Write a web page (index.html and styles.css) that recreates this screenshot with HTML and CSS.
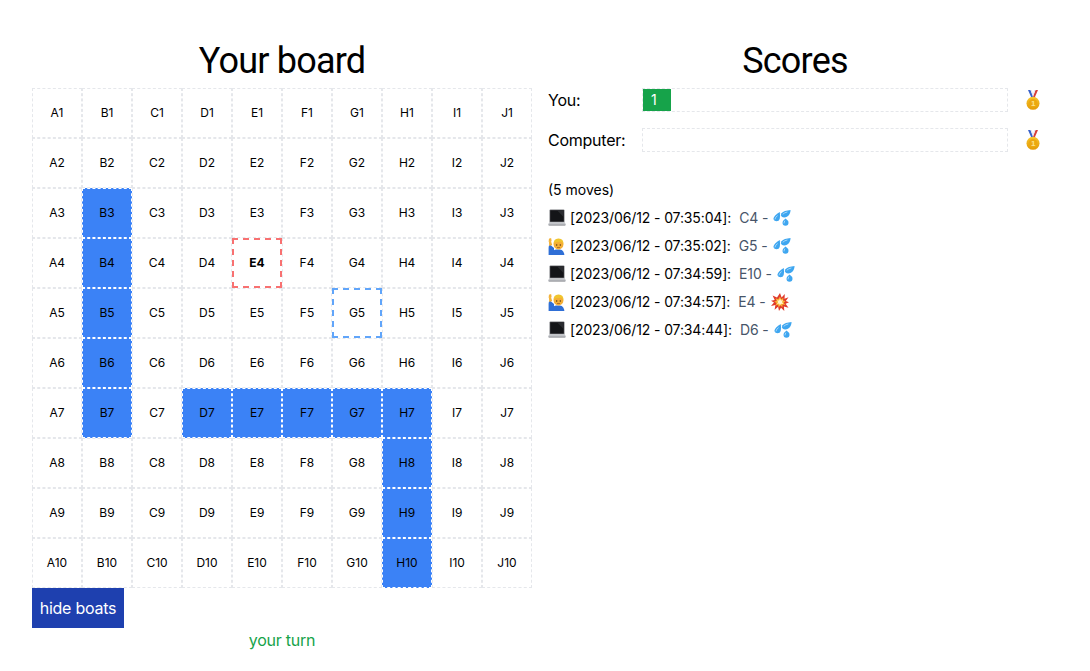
FILE: index.html
```html
<!DOCTYPE html>
<html lang="en">
<head>
    <meta charset="UTF-8">
    <meta name="viewport" content="width=device-width, initial-scale=1.0">
    <title>Battleship</title>
    <link rel="stylesheet" href="styles.css">
</head>
<body>
    <svg class="sprites" width="0" height="0" aria-hidden="true">
        <defs>
            <linearGradient id="gold" x1="0" y1="0" x2="0" y2="1">
                <stop offset="0" stop-color="#f7c52a"/>
                <stop offset="1" stop-color="#e39a06"/>
            </linearGradient>
        </defs>
        <symbol id="laptop" viewBox="0 0 18 18">
            <path d="M2.500 .5h13q1 0 1 1v11.500h-15V1.500q0-1 1-1z" fill="#77787c"/>
            <rect x="2.200" y="1.200" width="13.600" height="11.400" fill="#141518"/>
            <path d="M9 1.200h6.800v7z" fill="#2b2c30"/>
            <path d="M1.500 13h15l1.500 2.600q.1.900-.8.9H.8q-.9 0-.8-.9z" fill="#c2c4c8"/>
            <rect x="1" y="15.600" width="16" height=".9" fill="#8d8f94"/>
        </symbol>
        <symbol id="person" viewBox="0 0 18 18">
            <path d="M.6 18V10.500q0-2 1.300-3.100L6 11v7z" fill="#2f6fd6"/>
            <path d="M1.300 9L.9 4.500 2.900 4l1.300 4z" fill="#f3b23a"/>
            <path d="M.7 5Q.3 2 1.900 1l1.400.4.3 2.800z" fill="#f3b23a"/>
            <path d="M4 18q0-5 4-5.600h4q4 .6 4.400 5.600z" fill="#2f6fd6"/>
            <circle cx="10.500" cy="7.500" r="4.900" fill="#f4ae35"/>
            <path d="M5.500 7.500Q5.300 1.400 10.500 1.500 15.800 1.400 15.500 7.500 14.800 5 13 4.800 9 5.500 7 5.200 5.800 6 5.500 7.500z" fill="#f0c52e"/>
            <circle cx="8.700" cy="8" r=".7" fill="#4a2f10"/>
            <circle cx="12.300" cy="8" r=".7" fill="#4a2f10"/>
            <path d="M9 10.500h3" stroke="#a0581a" stroke-width=".7"/>
        </symbol>
        <symbol id="drops" viewBox="0 0 18 18">
            <path d="M6.800 3Q7.400 7 6.700 10A3.300 3.300 0 0 1 .4 10Q.8 6.500 6.800 3z" fill="#3ea6f0"/>
            <path d="M17.600 1Q17.400 5.500 14 7.800 11 9.200 8.800 7.800 7 6.300 8.500 4.200 11 1.500 17.600 1z" fill="#3ea6f0"/>
            <path d="M12.500 9.500Q15.500 11.500 15.500 13.800A3 3 0 0 1 9.500 13.800Q9.800 11.500 12.500 9.500z" fill="#3ea6f0"/>
            <path d="M2 10Q2.300 8 4.300 6.800M10 5Q11.500 3.600 14 3M11 14Q11 13 11.700 12" stroke="#bfe3fb" stroke-width=".8" stroke-linecap="round" fill="none"/>
        </symbol>
        <symbol id="boom" viewBox="0 0 18 18">
            <path d="M9 0l1.600 4.400L13.800 1l-.3 4.700 4-1.500-2.700 3.800 3.200 1.300-3.400 1.400 2.900 4-4.600-1.300.4 4.600-3.300-3.300L8 18l-.9-4.300-3.500 3 .8-4.600L0 13l3-3.600L0 7.800l3.700-.8L1.600 2.400l4.400 2z" fill="#e0392a"/>
            <path d="M9 3.500l1.200 2.800 2.300-1.500-.5 2.800 2.600.3-2 1.900 1.800 2.300-2.900-.5-.1 2.600-2.100-1.900-1.700 2.200-.5-2.800-2.700.8 1.200-2.600-2.500-1.100 2.600-1-1.200-2.500 2.700.9z" fill="#f9b233"/>
            <path d="M9 5.500l1 2 2.100-.3-1.100 1.900 1.200 1.800-2.200-.2-1.100 1.800-.8-1.900-2.100.4 1.200-1.900-1.200-1.700 2.100.1z" fill="#fff6cf"/>
        </symbol>
    </svg>

    <div class="game">
        <div class="board-col">
            <h1>Your board</h1>
            <div class="board">
                <div class="cell">A1</div><div class="cell">B1</div><div class="cell">C1</div><div class="cell">D1</div><div class="cell">E1</div><div class="cell">F1</div><div class="cell">G1</div><div class="cell">H1</div><div class="cell">I1</div><div class="cell">J1</div>
                <div class="cell">A2</div><div class="cell">B2</div><div class="cell">C2</div><div class="cell">D2</div><div class="cell">E2</div><div class="cell">F2</div><div class="cell">G2</div><div class="cell">H2</div><div class="cell">I2</div><div class="cell">J2</div>
                <div class="cell">A3</div><div class="cell boat">B3</div><div class="cell">C3</div><div class="cell">D3</div><div class="cell">E3</div><div class="cell">F3</div><div class="cell">G3</div><div class="cell">H3</div><div class="cell">I3</div><div class="cell">J3</div>
                <div class="cell">A4</div><div class="cell boat">B4</div><div class="cell">C4</div><div class="cell">D4</div><div class="cell hit">E4</div><div class="cell">F4</div><div class="cell">G4</div><div class="cell">H4</div><div class="cell">I4</div><div class="cell">J4</div>
                <div class="cell">A5</div><div class="cell boat">B5</div><div class="cell">C5</div><div class="cell">D5</div><div class="cell">E5</div><div class="cell">F5</div><div class="cell miss">G5</div><div class="cell">H5</div><div class="cell">I5</div><div class="cell">J5</div>
                <div class="cell">A6</div><div class="cell boat">B6</div><div class="cell">C6</div><div class="cell">D6</div><div class="cell">E6</div><div class="cell">F6</div><div class="cell">G6</div><div class="cell">H6</div><div class="cell">I6</div><div class="cell">J6</div>
                <div class="cell">A7</div><div class="cell boat">B7</div><div class="cell">C7</div><div class="cell boat">D7</div><div class="cell boat">E7</div><div class="cell boat">F7</div><div class="cell boat">G7</div><div class="cell boat">H7</div><div class="cell">I7</div><div class="cell">J7</div>
                <div class="cell">A8</div><div class="cell">B8</div><div class="cell">C8</div><div class="cell">D8</div><div class="cell">E8</div><div class="cell">F8</div><div class="cell">G8</div><div class="cell boat">H8</div><div class="cell">I8</div><div class="cell">J8</div>
                <div class="cell">A9</div><div class="cell">B9</div><div class="cell">C9</div><div class="cell">D9</div><div class="cell">E9</div><div class="cell">F9</div><div class="cell">G9</div><div class="cell boat">H9</div><div class="cell">I9</div><div class="cell">J9</div>
                <div class="cell">A10</div><div class="cell">B10</div><div class="cell">C10</div><div class="cell">D10</div><div class="cell">E10</div><div class="cell">F10</div><div class="cell">G10</div><div class="cell boat">H10</div><div class="cell">I10</div><div class="cell">J10</div>
            </div>
            <button class="toggle-boats">hide boats</button>
            <p class="turn">your turn</p>
        </div>

        <div class="score-col">
            <h1>Scores</h1>
            <div class="score-row">
                <span class="score-name">You:</span>
                <div class="score-track"><div class="score-fill" style="width: 28px">1</div></div>
                <svg class="medal" viewBox="0 0 16 20">
                    <path d="M3 0h2.500L8 6.500 6.500 8z" fill="#3a62c9"/>
                    <path d="M13 0h-2.500L8 6.500 9.500 8z" fill="#d8403a"/>
                    <path d="M5.500 0h1.300L8 3.500 9.200 0h1.300L8 6.500z" fill="#e8e8f2"/>
                    <circle cx="8" cy="13.300" r="6.500" fill="url(#gold)"/>
                    <circle cx="8" cy="13.300" r="4.300" fill="#eca80f"/>
                    <text x="8" y="16.200" text-anchor="middle" class="medal-digit">1</text>
                </svg>
            </div>
            <div class="score-row">
                <span class="score-name">Computer:</span>
                <div class="score-track"></div>
                <svg class="medal" viewBox="0 0 16 20">
                    <path d="M3 0h2.500L8 6.500 6.500 8z" fill="#3a62c9"/>
                    <path d="M13 0h-2.500L8 6.500 9.500 8z" fill="#d8403a"/>
                    <path d="M5.500 0h1.300L8 3.500 9.200 0h1.300L8 6.500z" fill="#e8e8f2"/>
                    <circle cx="8" cy="13.300" r="6.500" fill="url(#gold)"/>
                    <circle cx="8" cy="13.300" r="4.300" fill="#eca80f"/>
                    <text x="8" y="16.200" text-anchor="middle" class="medal-digit">1</text>
                </svg>
            </div>
            <p class="move-count">(5 moves)</p>
            <ul class="moves">
                <li><svg class="who"><use href="#laptop"/></svg>[2023/06/12 - 07:35:04]:<span class="coord">C4 -</span><svg class="result"><use href="#drops"/></svg></li>
                <li><svg class="who"><use href="#person"/></svg>[2023/06/12 - 07:35:02]:<span class="coord">G5 -</span><svg class="result"><use href="#drops"/></svg></li>
                <li><svg class="who"><use href="#laptop"/></svg>[2023/06/12 - 07:34:59]:<span class="coord">E10 -</span><svg class="result"><use href="#drops"/></svg></li>
                <li><svg class="who"><use href="#person"/></svg>[2023/06/12 - 07:34:57]:<span class="coord">E4 -</span><svg class="result"><use href="#boom"/></svg></li>
                <li><svg class="who"><use href="#laptop"/></svg>[2023/06/12 - 07:34:44]:<span class="coord">D6 -</span><svg class="result"><use href="#drops"/></svg></li>
            </ul>
        </div>
    </div>
</body>
</html>
```

FILE: styles.css
```css
* {
    margin: 0;
    padding: 0;
    box-sizing: border-box;
}
body {
    font-family: Inter, "Liberation Sans", sans-serif;
    background-color: #ffffff;
    color: #000000;
    font-size: 16px;
    line-height: 24px;
    letter-spacing: -0.25px;
}
.sprites {
    position: absolute;
}
.game {
    display: flex;
    gap: 16px;
    padding: 41px 48px 0 32px;
}
h1 {
    font-family: Roboto, Inter, sans-serif;
    font-size: 36px;
    font-weight: 400;
    line-height: 40px;
    letter-spacing: -0.8px;
    text-align: center;
    margin-bottom: 7px;
}
.board-col {
    width: 500px;
    flex-shrink: 0;
}
.board {
    display: grid;
    grid-template-columns: repeat(10, 50px);
    grid-auto-rows: 50px;
}
.cell {
    display: flex;
    align-items: center;
    justify-content: center;
    border: 1px dashed #e5e7eb;
    font-size: 12px;
    letter-spacing: 0;
}
.boat {
    background-color: #3b82f6;
    border-color: #ffffff;
}
.hit {
    border: 2px dashed #f87171;
    font-weight: 700;
}
.miss {
    border: 2px dashed #60a5fa;
}
.toggle-boats {
    display: block;
    width: 92px;
    height: 40px;
    background-color: #1e40af;
    color: #ffffff;
    border: none;
    font: inherit;
    letter-spacing: inherit;
}
.turn {
    color: #16a34a;
    text-align: center;
}
.score-col {
    flex-grow: 1;
}
.score-row {
    display: flex;
    align-items: center;
    height: 24px;
    margin-bottom: 16px;
}
.score-name {
    width: 94px;
    flex-shrink: 0;
}
.score-track {
    width: 366px;
    height: 24px;
    border: 1px dashed #e5e7eb;
}
.score-fill {
    height: 22px;
    background-color: #16a34a;
    color: #ffffff;
    font-size: 14px;
    line-height: 22px;
    padding-left: 8px;
}
.medal {
    width: 16px;
    height: 20px;
    margin-left: 17px;
}
.medal-digit {
    font-family: "Liberation Sans", sans-serif;
    font-size: 8px;
    font-weight: 700;
    fill: #fbe38a;
}
.move-count {
    font-size: 14px;
    line-height: 20px;
    margin-top: 28px;
    margin-bottom: 4px;
    letter-spacing: 0;
}
.moves {
    list-style: none;
    font-size: 14px;
    letter-spacing: -0.12px;
}
.moves li {
    display: flex;
    align-items: center;
    height: 28px;
}
.who {
    width: 18px;
    height: 18px;
    margin-right: 4px;
}
.coord {
    color: #475569;
    margin-left: 8px;
    margin-right: 5px;
}
.result {
    width: 18px;
    height: 18px;
}
```
